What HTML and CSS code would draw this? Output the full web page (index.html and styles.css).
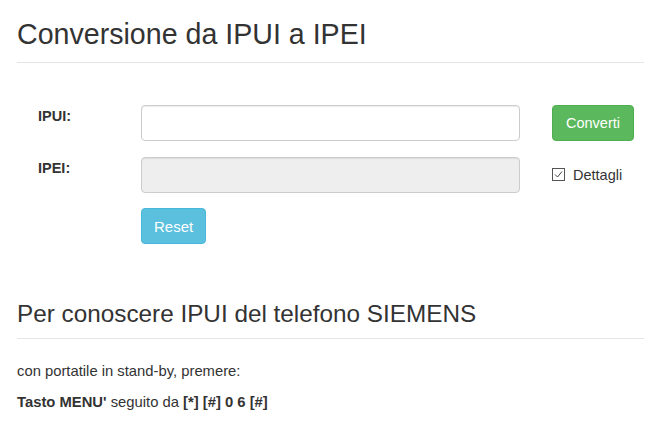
FILE: index.html
```html
<!DOCTYPE html>
<html lang="it">
<head>
<meta charset="utf-8">
<title>Conversione da IPUI a IPEI</title>
<link rel="stylesheet" href="styles.css">
</head>
<body>
<div class="container">
  <h1 class="page-title">Conversione da IPUI a IPEI</h1>
  <form class="conv-form">
    <label class="lbl">IPUI:</label>
    <input class="field" type="text">
    <div class="side"><button type="button" class="btn btn-green">Converti</button></div>

    <label class="lbl">IPEI:</label>
    <input class="field field-disabled" type="text" disabled>
    <div class="side side-check">
      <span class="check"><svg width="13" height="13" viewBox="0 0 13 13"><rect x="0.5" y="0.5" width="12" height="12" fill="#fff" stroke="#555"/><polyline points="3,6.5 5.5,9 10,3.5" fill="none" stroke="#444" stroke-width="1"/></svg></span>
      <span class="check-label">Dettagli</span>
    </div>

    <div></div>
    <div class="reset-cell"><button type="button" class="btn btn-blue">Reset</button></div>
    <div></div>
  </form>

  <h2 class="sub-title">Per conoscere IPUI del telefono SIEMENS</h2>
  <p class="txt">con portatile in stand-by, premere:</p>
  <p class="txt"><b>Tasto MENU'</b> seguito da <b>[*] [#] 0 6 [#]</b></p>
</div>
</body>
</html>
```
FILE: styles.css
```css
html, body {
  margin: 0;
  padding: 0;
  background: #fff;
}
body {
  font-family: "Liberation Sans", Arial, sans-serif;
  font-size: 14.5px;
  color: #333;
}
.container {
  padding: 0 21px 0 17px;
}
.page-title {
  margin: 18px 0 0;
  font-size: 28.6px;
  font-weight: normal;
  line-height: 32px;
  padding-bottom: 12px;
  border-bottom: 1px solid #e5e5e5;
}
.conv-form {
  display: grid;
  grid-template-columns: 103px 379px 125px;
  grid-auto-rows: 36px;
  row-gap: 15.5px;
  column-gap: 0;
  margin: 42px 0 0 21px;
  align-items: start;
}
.lbl {
  font-weight: bold;
  line-height: 20px;
  padding-top: 1px;
}
.field {
  box-sizing: border-box;
  height: 36px;
  width: 379px;
  margin: 0;
  border: 1px solid #ccc;
  border-radius: 4px;
  background: #fff;
  padding: 6px 12px;
  font: inherit;
  box-shadow: inset 0 1px 1px rgba(0,0,0,0.075);
}
.field-disabled {
  background: #eee;
}
.side {
  padding-left: 32px;
}
.side-check {
  display: flex;
  align-items: center;
  height: 36px;
  gap: 8px;
}
.check {
  display: flex;
}
.check-label {
  line-height: 20px;
}
.btn {
  box-sizing: border-box;
  height: 36px;
  border-radius: 4px;
  border: 1px solid transparent;
  color: #fff;
  font-family: inherit;
  font-size: 14.5px;
  padding: 0 12px;
  cursor: pointer;
}
.btn-green {
  background: #5cb85c;
  border-color: #4cae4c;
  width: 82px;
}
.btn-blue {
  background: #5bc0de;
  border-color: #46b8da;
  width: 65px;
  font-size: 15px;
}
.sub-title {
  margin: 56px 0 0;
  font-size: 24.3px;
  font-weight: normal;
  line-height: 28px;
  padding-bottom: 10px;
  border-bottom: 1px solid #e5e5e5;
}
.txt {
  margin: 22px 0 0;
  line-height: 20px;
  font-size: 14.8px;
}
.txt + .txt {
  margin-top: 11px;
}
```
